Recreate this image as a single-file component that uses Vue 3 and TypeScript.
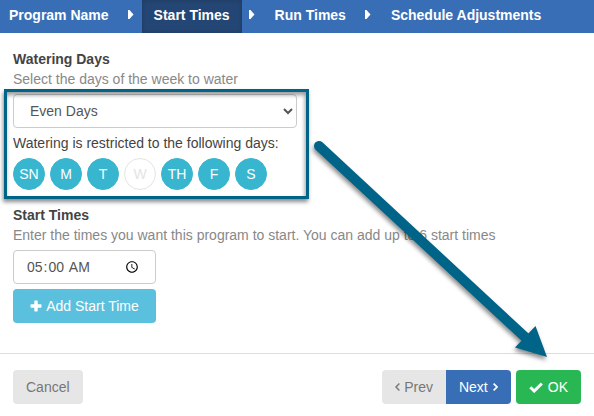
<script setup lang="ts">
import { ref } from 'vue'

interface Day {
  label: string
  name: string
  allowed: boolean
}

const steps: string[] = ['Program Name', 'Start Times', 'Run Times', 'Schedule Adjustments']
const activeStep = ref(1)
const interval = ref('Even Days')
const startTime = ref('05:00')

const days: Day[] = [
  { label: 'SN', name: 'Sunday', allowed: true },
  { label: 'M', name: 'Monday', allowed: true },
  { label: 'T', name: 'Tuesday', allowed: true },
  { label: 'W', name: 'Wednesday', allowed: false },
  { label: 'TH', name: 'Thursday', allowed: true },
  { label: 'F', name: 'Friday', allowed: true },
  { label: 'S', name: 'Saturday', allowed: true },
]
</script>

<template>
  <div class="wizard">
    <nav class="steps">
      <template v-for="(step, i) in steps" :key="step">
        <svg v-if="i > 0" class="sep" viewBox="0 0 6 9" aria-hidden="true">
          <path d="M0 0H1.5L5.5 4.5L1.5 9H0Z" fill="#fff" />
        </svg>
        <a href="#" class="step" :class="{ active: i === activeStep }" @click.prevent="activeStep = i">{{ step }}</a>
      </template>
    </nav>

    <main class="body">
      <section>
        <label class="title" for="interval">Watering Days</label>
        <p class="hint">Select the days of the week to water</p>
        <div class="restricted">
          <select id="interval" v-model="interval" class="field interval">
            <option>Even Days</option>
            <option>Odd Days</option>
          </select>
          <p class="note">Watering is restricted to the following days:</p>
          <div class="days">
            <span v-for="day in days" :key="day.name" class="day" :class="{ off: !day.allowed }">{{ day.label }}</span>
          </div>
          <div class="highlight"></div>
        </div>
      </section>

      <section class="times">
        <label class="title" for="start">Start Times</label>
        <p class="hint">Enter the times you want this program to start. You can add up to 6 start times</p>
        <div class="time-list">
          <input id="start" v-model="startTime" class="field" type="time" />
          <button type="button" class="btn add">
            <svg width="12" height="12" viewBox="0 0 12 12" aria-hidden="true">
              <path d="M5 0.5H7Q7.7 0.5 7.7 1.2V4.3H10.8Q11.5 4.3 11.5 5V7Q11.5 7.7 10.8 7.7H7.7V10.8Q7.7 11.5 7 11.5H5Q4.3 11.5 4.3 10.8V7.7H1.2Q.5 7.7 .5 7V5Q.5 4.3 1.2 4.3H4.3V1.2Q4.3.5 5 .5Z" fill="currentColor" />
            </svg>
            Add Start Time
          </button>
        </div>
      </section>
    </main>

    <footer class="footer">
      <button type="button" class="btn muted">Cancel</button>
      <div class="group">
        <button type="button" class="btn muted prev">
          <svg width="5" height="8" viewBox="0 0 5 8" aria-hidden="true">
            <path d="M4.4 .6L1 4L4.4 7.4" fill="none" stroke="currentColor" stroke-width="1.4" />
          </svg>
          Prev
        </button>
        <button type="button" class="btn next">
          Next
          <svg width="5" height="8" viewBox="0 0 5 8" aria-hidden="true">
            <path d="M.6 .6L4 4L.6 7.4" fill="none" stroke="currentColor" stroke-width="1.7" />
          </svg>
        </button>
      </div>
      <button type="button" class="btn ok">
        <svg width="14" height="11" viewBox="0 0 14 11" aria-hidden="true">
          <path d="M1.3 5.2L5.2 9L12.8 1.5" fill="none" stroke="currentColor" stroke-width="3" />
        </svg>
        OK
      </button>
    </footer>

    <svg class="pointer" width="594" height="416" viewBox="0 0 594 416" aria-hidden="true">
      <path d="M319 146L526 338" fill="none" stroke="#006488" stroke-width="10" stroke-linecap="round" />
      <path d="M547 357L515 347.5L535.5 326Z" fill="#006488" />
    </svg>
  </div>
</template>

<style>
body {
  background: #fff;
}
</style>

<style scoped>
.wizard {
  position: relative;
  overflow: hidden;
  font: 14px/20px "Liberation Sans", Arial, sans-serif;
  color: #444;
}

.steps {
  display: flex;
  align-items: center;
  height: 33px;
  background: #386eb6;
}

.step {
  padding: 5px 12px 8px;
  color: #fff;
  font-weight: bold;
  text-decoration: none;
  white-space: nowrap;
}

.step:first-child {
  padding-left: 9px;
}

.step.active {
  background: #244674;
  box-shadow: inset 0 0 4px rgba(0, 0, 0, 0.2);
}

.sep {
  flex: none;
  width: 6px;
  height: 9px;
  margin: 0 8px 5px 7px;
}

.body {
  padding: 16px 13px 30px;
}

.title {
  display: block;
  font-weight: bold;
}

.hint,
.note {
  margin: 0;
}

.hint {
  color: #888;
}

.restricted {
  position: relative;
  width: 284px;
  margin-top: 5px;
}

.highlight {
  position: absolute;
  inset: -5px -12px -9px -9px;
  border: 3px solid #006488;
  box-shadow: -1px 3px 4px rgba(0, 0, 0, 0.45), inset -1px 3px 4px rgba(0, 0, 0, 0.4);
  pointer-events: none;
}

.field {
  box-sizing: border-box;
  display: block;
  height: 34px;
  margin: 0;
  padding: 6px 12px;
  border: 1px solid #ccc;
  border-radius: 4px;
  background: #fff;
  color: #555;
  font: inherit;
}

.interval {
  width: 100%;
}

.note {
  margin: 5px 0;
}

.days {
  display: flex;
  gap: 5px;
}

.day {
  box-sizing: border-box;
  width: 32px;
  height: 32px;
  border: 1px solid #38b6cf;
  border-radius: 50%;
  background: #38b6cf;
  color: #fff;
  line-height: 30px;
  text-align: center;
}

.day.off {
  border-color: #e4e4e4;
  background: #fff;
  color: #e4e4e4;
}

.times {
  margin-top: 15px;
}

.time-list {
  display: grid;
  gap: 5px;
  width: 143px;
  margin-top: 5px;
}

.btn {
  display: flex;
  align-items: center;
  justify-content: center;
  gap: 4px;
  height: 34px;
  padding: 0 13px;
  border: 0;
  border-radius: 4px;
  color: #fff;
  font: inherit;
  white-space: nowrap;
}

.add {
  background: #5bc0de;
}

.footer {
  display: flex;
  gap: 5px;
  padding: 16px 13px 12px;
  border-top: 1px solid #ddd;
}

.muted {
  background: #e6e6e6;
  color: #777;
}

.group {
  display: flex;
  margin-left: auto;
}

.prev {
  border-radius: 4px 0 0 4px;
}

.next {
  gap: 5px;
  border-radius: 0 4px 4px 0;
  background: #386eb6;
}

.ok {
  gap: 5px;
  background: #28b753;
}

.pointer {
  position: absolute;
  top: 0;
  left: 0;
  overflow: visible;
  filter: drop-shadow(-1px 3px 2px rgba(0, 0, 0, 0.45));
  pointer-events: none;
}
</style>
